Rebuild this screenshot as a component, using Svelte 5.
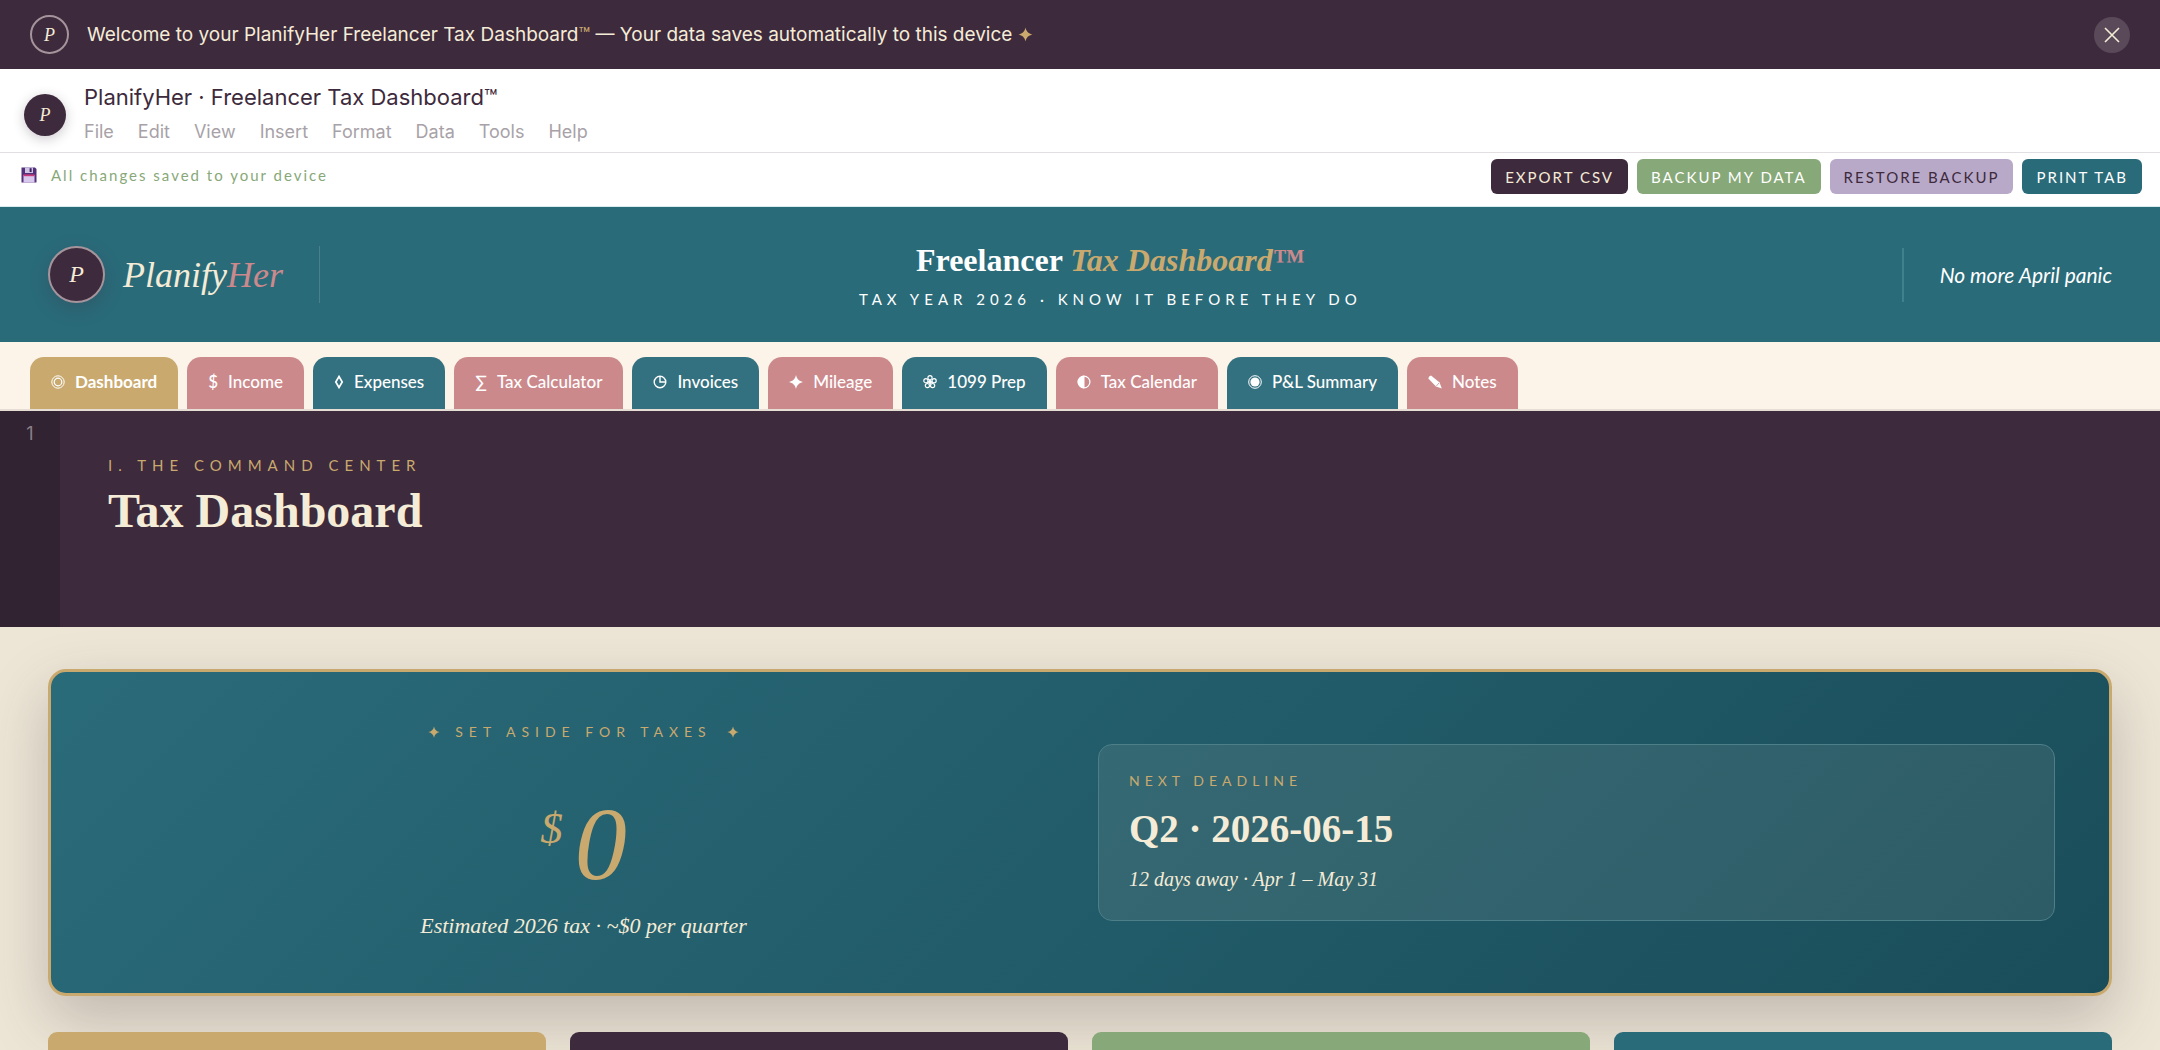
<script>
    let bannerOpen = $state(true);
    let activeTab = $state('Dashboard');

    const menus = ['File', 'Edit', 'View', 'Insert', 'Format', 'Data', 'Tools', 'Help'];

    const actions = [
        { label: 'Export CSV', tone: 'plum' },
        { label: 'Backup My Data', tone: 'sage' },
        { label: 'Restore Backup', tone: 'lilac' },
        { label: 'Print Tab', tone: 'teal' }
    ];

    const tabs = [
        { label: 'Dashboard', icon: 'target', tone: 'teal' },
        { label: 'Income', glyph: '$', tone: 'rose' },
        { label: 'Expenses', icon: 'lozenge', tone: 'teal' },
        { label: 'Tax Calculator', glyph: '∑', tone: 'rose' },
        { label: 'Invoices', icon: 'clock', tone: 'teal' },
        { label: 'Mileage', icon: 'star', tone: 'rose' },
        { label: '1099 Prep', icon: 'flower', tone: 'teal' },
        { label: 'Tax Calendar', icon: 'half', tone: 'rose' },
        { label: 'P&L Summary', icon: 'fisheye', tone: 'teal' },
        { label: 'Notes', icon: 'pencil', tone: 'rose' }
    ];

    const stats = ['gold', 'plum', 'sage', 'teal'];
</script>

{#snippet star()}
    <svg class="star" viewBox="0 0 16 16" aria-hidden="true">
        <path d="M8 0.5C9 4.8 11.2 7 15.5 8C11.2 9 9 11.2 8 15.5C7 11.2 4.8 9 0.5 8C4.8 7 7 4.8 8 0.5Z" fill="currentColor" />
    </svg>
{/snippet}

{#snippet tabIcon(name)}
    <svg class={`tab-icon ${name}`} viewBox={name === 'lozenge' ? '2 0 10 14' : '0 0 14 14'} fill="none" stroke="currentColor" aria-hidden="true">
        {#if name === 'target'}
            <circle cx="7" cy="7" r="6.2" />
            <circle cx="7" cy="7" r="3.8" stroke-width="1.2" />
        {:else if name === 'lozenge'}
            <path d="M7 1.5L10.2 7L7 12.5L3.8 7Z" stroke-width="1.7" />
        {:else if name === 'clock'}
            <circle cx="7" cy="7" r="5.8" stroke-width="1.4" />
            <path d="M7 1.2V7H12.8" stroke-width="1.4" />
        {:else if name === 'star'}
            <path d="M7 0C8 4 10 6 14 7C10 8 8 10 7 14C6 10 4 8 0 7C4 6 6 4 7 0Z" fill="currentColor" stroke="none" />
        {:else if name === 'flower'}
            <circle cx="7" cy="2.7" r="2.1" stroke-width="1.2" />
            <circle cx="11.1" cy="5.7" r="2.1" stroke-width="1.2" />
            <circle cx="9.6" cy="10.6" r="2.1" stroke-width="1.2" />
            <circle cx="4.4" cy="10.6" r="2.1" stroke-width="1.2" />
            <circle cx="2.9" cy="5.7" r="2.1" stroke-width="1.2" />
            <circle cx="7" cy="7" r="1.5" fill="currentColor" />
        {:else if name === 'half'}
            <circle cx="7" cy="7" r="5.9" stroke-width="1.2" />
            <path d="M7 1.1A5.9 5.9 0 0 0 7 12.9Z" fill="currentColor" />
        {:else if name === 'fisheye'}
            <circle cx="7" cy="7" r="6.3" />
            <circle cx="7" cy="7" r="4.6" fill="currentColor" stroke="none" />
        {:else if name === 'pencil'}
            <path d="M0.3 3.4Q0.6 1 3 0.6L11.6 7.6L13.8 13.4L8 11.6Z" fill="currentColor" stroke="none" />
            <path d="M8.4 11L11 8" stroke="#cc898c" stroke-width="0.8" />
        {/if}
    </svg>
{/snippet}

<div class="page">
    {#if bannerOpen}
        <div class="banner">
            <span class="mark mark-outline">P</span>
            <p>Welcome to your PlanifyHer Freelancer Tax Dashboard<span class="gold-text">™</span> — Your data saves automatically to this device <span class="gold-text">{@render star()}</span></p>
            <button class="close" aria-label="Dismiss" onclick={() => (bannerOpen = false)}>
                <svg viewBox="0 0 16 16" aria-hidden="true">
                    <path d="M1 1L15 15M15 1L1 15" stroke="currentColor" stroke-width="1.6" />
                </svg>
            </button>
        </div>
    {/if}

    <header class="doc-bar">
        <span class="mark mark-small">P</span>
        <div>
            <div class="doc-title">PlanifyHer · Freelancer Tax Dashboard™</div>
            <nav class="menus">
                {#each menus as menu}
                    <button>{menu}</button>
                {/each}
            </nav>
        </div>
    </header>

    <div class="toolbar">
        <div class="saved">
            <svg class="disk" viewBox="0 0 16 16" aria-hidden="true">
                <path d="M0.5 0.5H14L15.5 2V15.5H0.5Z" fill="#53307a" />
                <rect x="4" y="0.5" width="8" height="5.5" fill="#cfc3e6" />
                <rect x="8.6" y="1.2" width="2" height="3.8" fill="#3d2460" />
                <rect x="2.5" y="8" width="11" height="7.5" fill="#d9c8ee" />
                <rect x="2.5" y="7.4" width="11" height="1.8" fill="#c93a7c" />
            </svg>
            <span>All changes saved to your device</span>
        </div>
        <div class="actions">
            {#each actions as action}
                <button class={action.tone}>{action.label}</button>
            {/each}
        </div>
    </div>

    <div class="brand-bar">
        <div class="brand">
            <span class="mark mark-large">P</span>
            <span class="wordmark">Planify<span>Her</span></span>
        </div>
        <div class="brand-center">
            <div class="product">Freelancer <em>Tax Dashboard</em><span>™</span></div>
            <div class="tagline">Tax Year 2026 · Know it before they do</div>
        </div>
        <div class="motto">No more April panic</div>
    </div>

    <nav class="tabs">
        {#each tabs as tab}
            <button
                class={tab.tone}
                class:active={activeTab === tab.label}
                onclick={() => (activeTab = tab.label)}
            >
                {#if tab.glyph}
                    <span class="glyph">{tab.glyph}</span>
                {:else}
                    {@render tabIcon(tab.icon)}
                {/if}
                {tab.label}
            </button>
        {/each}
    </nav>

    <section class="hero">
        <div class="row-number">1</div>
        <div class="hero-text">
            <div class="eyebrow">I. The Command Center</div>
            <h1>Tax Dashboard</h1>
        </div>
    </section>

    <main>
        <section class="summary">
            <div class="set-aside">
                <div class="eyebrow">{@render star()} <span>Set aside for taxes</span> {@render star()}</div>
                <div class="amount"><sup>$</sup>0</div>
                <div class="estimate">Estimated 2026 tax · ~$0 per quarter</div>
            </div>
            <div class="deadline">
                <div class="eyebrow">Next Deadline</div>
                <div class="date">Q2 · 2026-06-15</div>
                <div class="countdown">12 days away · Apr 1 – May 31</div>
            </div>
        </section>

        <div class="stats">
            {#each stats as tone}
                <div class={`stat ${tone}`}></div>
            {/each}
        </div>
    </main>
</div>

<style>
    :global(body) {
        margin: 0;
    }

    .page {
        --plum: #3d2a3c;
        --teal: #2a6b7a;
        --gold: #c9a96e;
        --rose: #cc898c;
        --sage: #87a878;
        --lilac: #b8a9c9;
        --cream: #f5ecd7;
        --ui: "Lato", sans-serif;
        --body: "Inter", sans-serif;
        --serif: "Liberation Serif", serif;
        display: flex;
        flex-direction: column;
        height: 100vh;
        overflow: hidden;
        background: #ede6d6;
        color: var(--plum);
        font-family: var(--ui);
    }

    button {
        border: 0;
        margin: 0;
        padding: 0;
        background: none;
        color: inherit;
        font: inherit;
        cursor: pointer;
    }

    .plum {
        background: var(--plum);
        color: var(--cream);
    }

    .teal {
        background: var(--teal);
        color: #fff;
    }

    .gold {
        background: var(--gold);
    }

    .rose {
        background: var(--rose);
        color: #fff;
    }

    .sage {
        background: var(--sage);
        color: #fff;
    }

    .lilac {
        background: var(--lilac);
        color: var(--plum);
    }

    .gold-text {
        color: var(--gold);
    }

    .star {
        width: 12px;
        height: 12px;
    }

    .mark {
        display: flex;
        align-items: center;
        justify-content: center;
        box-sizing: border-box;
        flex: none;
        border-radius: 50%;
        background: var(--plum);
        color: var(--cream);
        font-family: var(--serif);
        font-style: italic;
    }

    .mark-outline {
        width: 39px;
        height: 39px;
        border: 2px solid #a5949c;
        font-size: 18px;
    }

    .mark-small {
        width: 42px;
        height: 42px;
        font-size: 18px;
        box-shadow: 0 3px 12px rgba(61, 42, 60, 0.25);
    }

    .mark-large {
        width: 57px;
        height: 57px;
        border: 2px solid #a5949c;
        font-size: 24px;
        box-shadow: 0 6px 18px rgba(61, 42, 60, 0.25);
    }

    .banner {
        display: flex;
        align-items: center;
        gap: 18px;
        padding: 15px 30px;
        background: var(--plum);
        color: var(--cream);
        font-family: var(--body);
        font-size: 19px;
        line-height: 24px;
    }

    .banner p {
        flex: 1;
        margin: 0;
    }

    .banner .star {
        width: 15px;
        height: 15px;
        vertical-align: -1px;
    }

    .close {
        display: flex;
        align-items: center;
        justify-content: center;
        width: 36px;
        height: 36px;
        border-radius: 50%;
        background: #5a4a59;
    }

    .close svg {
        width: 16px;
        height: 16px;
    }

    .doc-bar {
        display: flex;
        align-items: center;
        gap: 18px;
        padding: 12px 24px 3px;
        border-bottom: 1px solid #e2dfe2;
        background: #fff;
        font-family: var(--body);
    }

    .doc-title {
        font-size: 22px;
        line-height: 32px;
    }

    .menus {
        display: flex;
        gap: 24px;
        margin-top: 2px;
        color: #a8a2a8;
        font-size: 18px;
        line-height: 34px;
    }

    .toolbar {
        display: flex;
        justify-content: space-between;
        padding: 6px 18px 12px;
        border-bottom: 1px solid #d9ebed;
        background: #fff;
    }

    .saved {
        display: flex;
        align-items: center;
        gap: 14px;
        height: 32px;
        padding-left: 3px;
        color: var(--sage);
        font-size: 15px;
        letter-spacing: 2px;
    }

    .disk {
        width: 16px;
        height: 16px;
    }

    .actions {
        display: flex;
        gap: 9px;
    }

    .actions button {
        height: 35px;
        padding: 0 14px;
        border-radius: 6px;
        font-size: 15px;
        letter-spacing: 2px;
        text-transform: uppercase;
    }

    .brand-bar {
        display: flex;
        align-items: center;
        justify-content: space-between;
        padding: 33px 48px;
        background: var(--teal);
        color: #fff;
    }

    .brand {
        display: flex;
        align-items: center;
        gap: 18px;
        padding-right: 36px;
        box-shadow: 1px 0 #48808d;
    }

    .wordmark {
        color: var(--cream);
        font-family: var(--serif);
        font-size: 36px;
        font-style: italic;
    }

    .wordmark span,
    .product span {
        color: var(--rose);
    }

    .brand-center {
        text-align: center;
    }

    .product {
        font-family: var(--serif);
        font-size: 32px;
        font-weight: 700;
        line-height: 40px;
    }

    .product em {
        color: var(--gold);
    }

    .tagline {
        margin-top: 9px;
        font-size: 15px;
        letter-spacing: 5px;
        line-height: 20px;
        text-transform: uppercase;
    }

    .motto {
        padding-left: 36px;
        border-left: 2px solid #40818e;
        font-size: 21px;
        font-style: italic;
        line-height: 54px;
    }

    .tabs {
        display: flex;
        gap: 9px;
        padding: 15px 30px 0;
        border-bottom: 2px solid #e6ddd4;
        background: #fcf4e8;
    }

    .tabs button {
        display: flex;
        align-items: center;
        gap: 10px;
        height: 52px;
        padding: 0 21px 3px;
        border-radius: 14px 14px 0 0;
        font-size: 17px;
        font-weight: 500;
        white-space: nowrap;
    }

    .tabs .teal {
        background: #347180;
    }

    .tabs .active {
        background: var(--gold);
        font-weight: 700;
    }

    .tab-icon {
        width: 14px;
        height: 14px;
    }

    .tab-icon.lozenge {
        width: 10px;
    }

    .hero {
        display: flex;
        min-height: 216px;
        background: var(--plum);
    }

    .row-number {
        width: 60px;
        padding-top: 12px;
        background: #322332;
        color: #8d7f88;
        font-family: var(--body);
        font-size: 18px;
        text-align: center;
    }

    .hero-text {
        padding: 42px 48px;
    }

    .eyebrow {
        color: var(--gold);
        font-size: 15px;
        letter-spacing: 6px;
        line-height: 24px;
        text-transform: uppercase;
    }

    h1 {
        margin: 6px 0 0;
        color: var(--cream);
        font-family: var(--serif);
        font-size: 48px;
        line-height: 56px;
    }

    main {
        display: flex;
        flex: 1;
        flex-direction: column;
        gap: 36px;
        padding: 42px 48px 0;
    }

    .summary {
        display: grid;
        grid-template-columns: 1fr 1fr;
        align-items: center;
        gap: 36px;
        padding: 48px 54px;
        border: 3px solid var(--gold);
        border-radius: 18px;
        background: linear-gradient(135deg, #2a6b7a, #1a4d5a);
        box-shadow: 0 24px 60px rgba(61, 42, 60, 0.25);
        color: var(--cream);
    }

    .set-aside {
        text-align: center;
    }

    .set-aside .eyebrow {
        display: flex;
        align-items: center;
        justify-content: center;
        gap: 15px;
        font-size: 14px;
    }

    .amount {
        margin-top: 48px;
        color: var(--gold);
        font-family: var(--serif);
        font-size: 104px;
        font-style: italic;
        line-height: 104px;
    }

    .amount sup {
        margin-right: 12px;
        font-size: 45px;
        line-height: 0;
    }

    .estimate,
    .countdown {
        font-family: var(--serif);
        font-style: italic;
    }

    .estimate {
        margin-top: 10px;
        font-size: 22px;
        line-height: 39px;
    }

    .deadline {
        padding: 24px 30px;
        border: 1px solid #4c7f88;
        border-radius: 14px;
        background: rgba(245, 236, 215, 0.09);
    }

    .deadline .eyebrow {
        font-size: 14px;
        letter-spacing: 5px;
    }

    .date {
        margin-top: 12px;
        font-family: var(--serif);
        font-size: 39px;
        font-weight: 700;
        line-height: 48px;
    }

    .countdown {
        margin-top: 10px;
        font-size: 20px;
        line-height: 33px;
    }

    .stats {
        display: grid;
        flex: 1;
        grid-template-columns: repeat(4, 1fr);
        gap: 24px;
    }

    .stat {
        border-radius: 9px 9px 0 0;
    }
</style>
